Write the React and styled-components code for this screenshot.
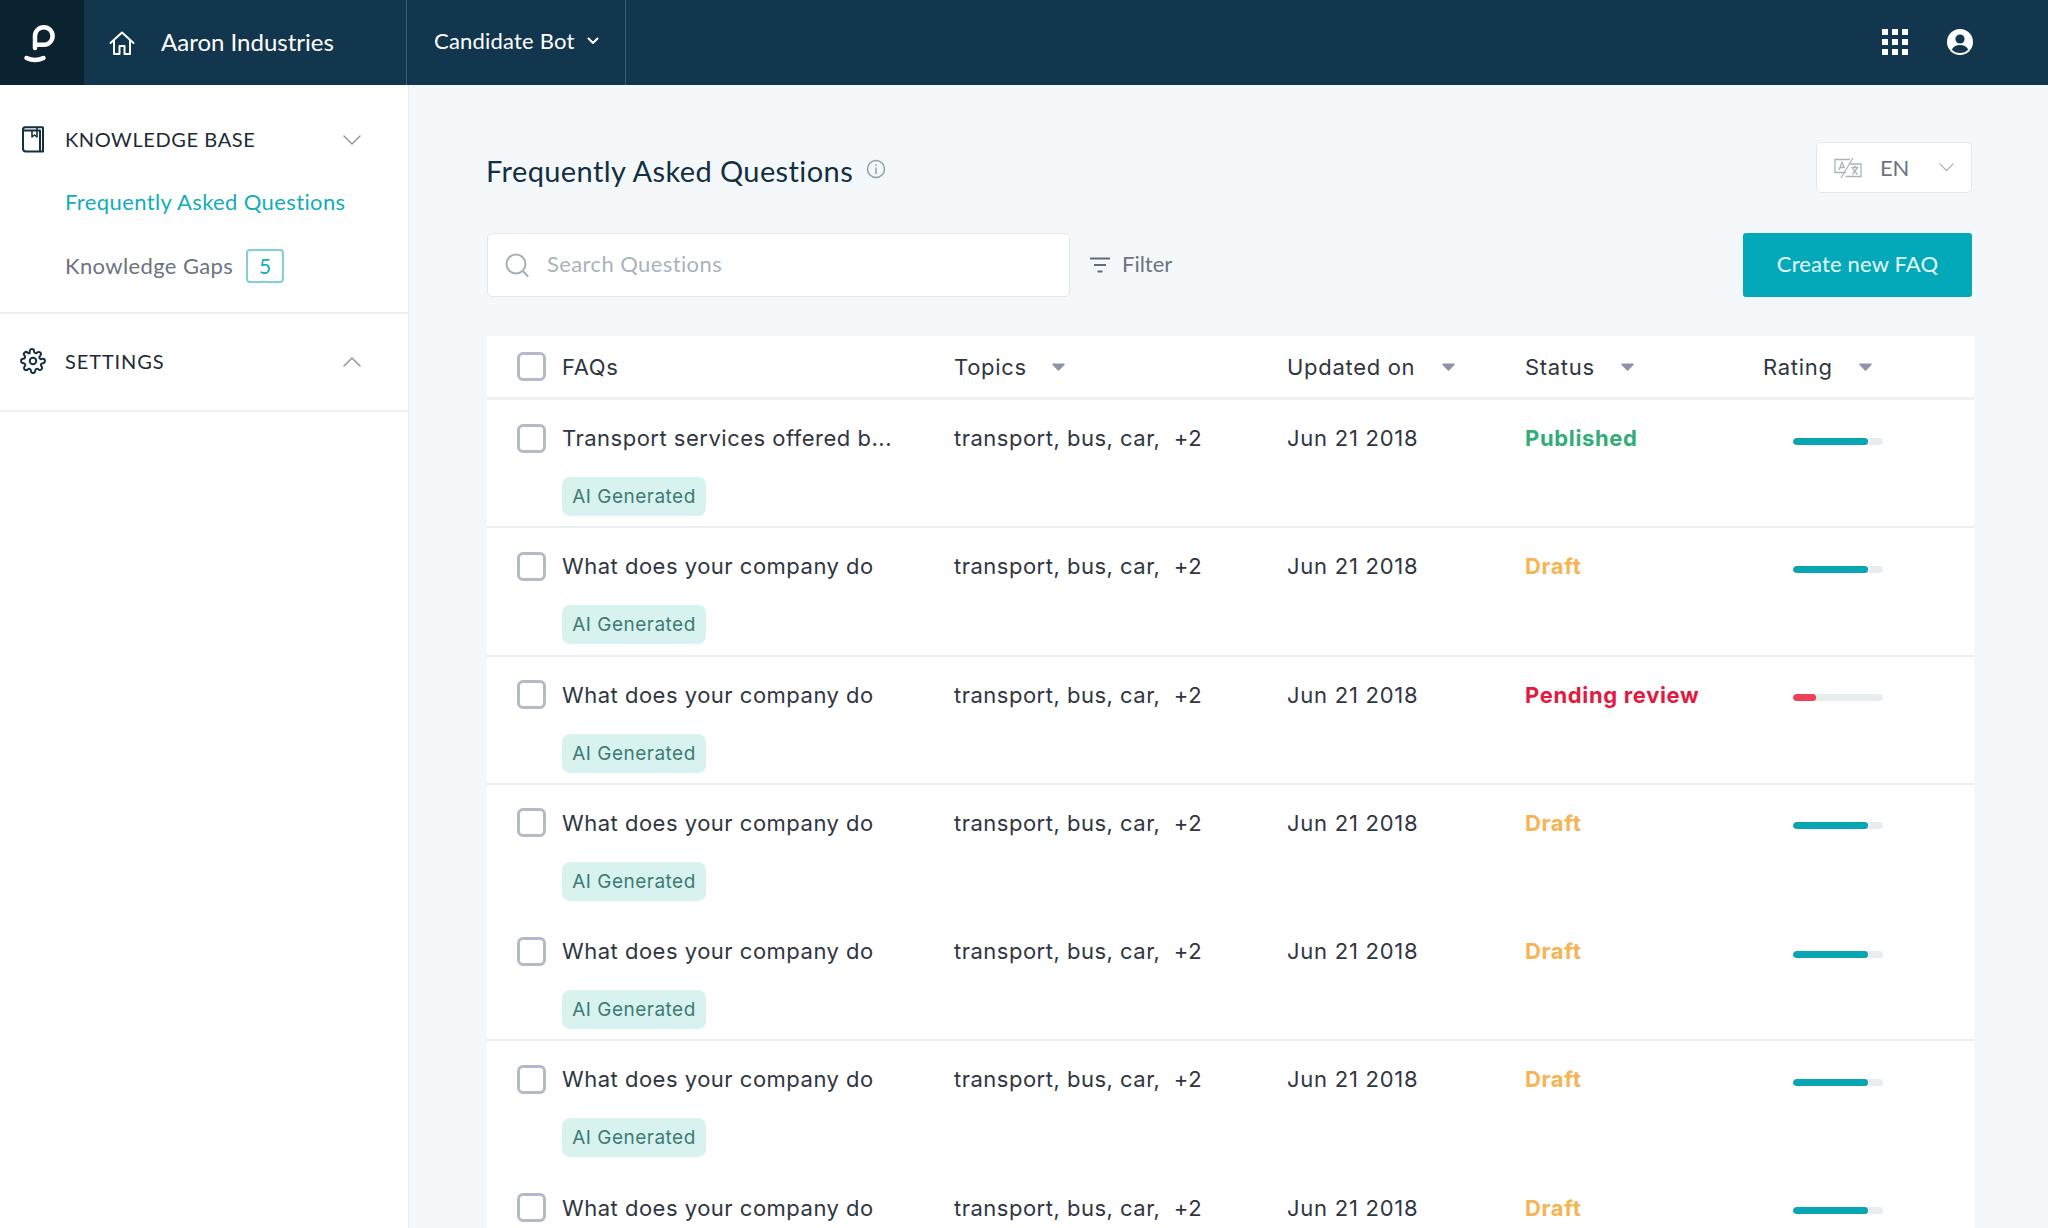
import React from 'react';
import styled, { createGlobalStyle } from 'styled-components';

const GlobalStyle = createGlobalStyle`
    html, body {
        margin: 0;
        padding: 0;
        height: 100%;
        overflow: hidden;
    }
    body {
        font-family: "Lato", "Liberation Sans", sans-serif;
        background: #f4f8fb;
    }
    * { box-sizing: border-box; }
`;

const rows = [
    { title: 'Transport services offered b...', status: 'Published', rating: 83, tag: true },
    { title: 'What does your company do', status: 'Draft', rating: 83, tag: true },
    { title: 'What does your company do', status: 'Pending review', rating: 25, tag: true },
    { title: 'What does your company do', status: 'Draft', rating: 83, tag: true, noLine: true },
    { title: 'What does your company do', status: 'Draft', rating: 83, tag: true },
    { title: 'What does your company do', status: 'Draft', rating: 83, tag: true, noLine: true },
    { title: 'What does your company do', status: 'Draft', rating: 83 },
];

const statusColors = {
    Published: '#33ad78',
    Draft: '#f5b553',
    'Pending review': '#e4193f',
};

const Logo = () => (
    <svg width="44" height="44" viewBox="0 0 44 44" fill="none" stroke="#fff" strokeWidth="4.500" strokeLinecap="round">
        <path d="M15 27V15a8.800 8.800 0 1 1 8.800 8.800H17" />
        <path d="M6.500 37c5.500 2.600 11.500 2.600 17 0" />
    </svg>
);

const HomeIcon = () => (
    <svg width="26" height="26" viewBox="0 0 26 26" fill="none" stroke="#fff" strokeWidth="2" strokeLinejoin="round" strokeLinecap="round">
        <path d="M1.500 13 13 2.500 24.500 13" />
        <path d="M5 10.500V24h5.500v-8h5v8H21V10.500" />
    </svg>
);

const SmallChevron = () => (
    <svg width="12" height="8" viewBox="0 0 12 8" fill="none" stroke="#fff" strokeWidth="2" strokeLinecap="round" strokeLinejoin="round">
        <path d="M1.500 1.500 6 6l4.500-4.500" />
    </svg>
);

const GridIcon = () => (
    <svg width="26" height="26" viewBox="0 0 26 26" fill="#fff">
        {[0, 10, 20].map((y) => [0, 10, 20].map((x) => <rect key={`${x}-${y}`} x={x} y={y} width="6" height="6" />))}
    </svg>
);

const UserIcon = () => (
    <svg width="26" height="26" viewBox="0 0 26 26">
        <circle cx="13" cy="13" r="13" fill="#fff" />
        <circle cx="13" cy="10" r="4.600" fill="#12364d" />
        <path d="M4.800 20.500C6.500 17.200 9.500 16 13 16s6.500 1.200 8.200 4.500C19.300 23 16.300 24 13 24s-6.300-1-8.200-3.500Z" fill="#12364d" />
    </svg>
);

const BookIcon = () => (
    <svg width="22" height="27" viewBox="0 0 22 27" fill="none" stroke="#12303f" strokeWidth="2" strokeLinejoin="round">
        <path d="M3 1.200h17.500a.5.500 0 0 1 .5.500v23.800H4a3 3 0 0 1-3-3V3.500a2.300 2.300 0 0 1 2-2.300Z" />
        <path d="M1 4.500h17v21" />
        <path d="M10 4.500V11l2.500-2 2.500 2V1.500" strokeWidth="1.600" />
    </svg>
);

const GearIcon = () => (
    <svg width="26" height="26" viewBox="0 0 24 24" fill="none" stroke="#12303f" strokeWidth="1.800" strokeLinecap="round" strokeLinejoin="round">
        <circle cx="12" cy="12" r="3" />
        <path d="M19.400 15a1.650 1.650 0 0 0 .33 1.820l.06.06a2 2 0 1 1-2.830 2.830l-.06-.06a1.650 1.650 0 0 0-2.820 1.170V21a2 2 0 1 1-4 0v-.09A1.650 1.650 0 0 0 9 19.400a1.650 1.650 0 0 0-1.820.33l-.06.06a2 2 0 1 1-2.830-2.830l.06-.06A1.650 1.650 0 0 0 3.180 14H3a2 2 0 1 1 0-4h.09A1.650 1.650 0 0 0 4.600 9a1.650 1.650 0 0 0-.33-1.820l-.06-.06a2 2 0 1 1 2.830-2.830l.06.06A1.650 1.650 0 0 0 9 4.680V3a2 2 0 1 1 4 0v.09a1.650 1.650 0 0 0 2.820 1.170l.06-.06a2 2 0 1 1 2.830 2.830l-.06.06A1.650 1.650 0 0 0 20.820 10H21a2 2 0 1 1 0 4h-.09a1.650 1.650 0 0 0-1.510 1Z" />
    </svg>
);

const ThinChevron = ({ up, color = '#8d97a5', size = 18 }) => (
    <svg width={size} height={size * 0.56} viewBox="0 0 18 10" fill="none" stroke={color} strokeWidth="1.500" strokeLinecap="round" strokeLinejoin="round">
        <path d={up ? 'M1 9l8-8 8 8' : 'M1 1l8 8 8-8'} />
    </svg>
);

const InfoIcon = () => (
    <svg width="20" height="20" viewBox="0 0 20 20" fill="none" stroke="#8fa1ad" strokeWidth="1.500" strokeLinecap="round">
        <circle cx="10" cy="10" r="8.500" />
        <path d="M10 9v5.500" />
        <path d="M10 5.800v.4" />
    </svg>
);

const TranslateIcon = () => (
    <svg width="28" height="22" viewBox="0 0 28 22" fill="none" stroke="#aab3bd" strokeWidth="1.300">
        <path d="M12 15.500H1V2.500h15" />
        <path d="M16 7h11v12.500H11.500" />
        <path d="M7 21 19 1" />
        <path d="M5 13 8 5.500 10.500 11M6 10.500h4" />
        <path d="M17.500 10.500h7M21 8.500v2M18.500 17.500l5-7M18.500 11.500l5 6" />
    </svg>
);

const SearchIcon = () => (
    <svg width="24" height="24" viewBox="0 0 24 24" fill="none" stroke="#a5b1ba" strokeWidth="2" strokeLinecap="round">
        <circle cx="11" cy="11" r="9.500" />
        <path d="M18 18l4.500 5" />
    </svg>
);

const FilterIcon = () => (
    <svg width="20" height="16" viewBox="0 0 20 16" fill="none" stroke="#5f6b7a" strokeWidth="2">
        <path d="M0 1.500h20M4 8h12M7.500 14.500h5" />
    </svg>
);

const Caret = () => (
    <svg width="13" height="8" viewBox="0 0 13 8">
        <path d="M1 .5h11a.8.800 0 0 1 .6 1.300L7.100 7.500a.8.800 0 0 1-1.200 0L.4 1.800A.8.800 0 0 1 1 .5Z" fill="#8d93a8" />
    </svg>
);

const App = () => {
    return (
        <Page>
            <GlobalStyle />
            <TopBar>
                <LogoBox><Logo /></LogoBox>
                <CompanyBox>
                    <HomeIcon />
                    <CompanyName>Aaron Industries</CompanyName>
                </CompanyBox>
                <BotBox>
                    <BotName>Candidate Bot</BotName>
                    <SmallChevron />
                </BotBox>
                <TopRight>
                    <GridIcon />
                    <UserIcon />
                </TopRight>
            </TopBar>

            <Body>
                <SideBar>
                    <SideSection $height={229}>
                        <SideHead>
                            <SideIcon><BookIcon /></SideIcon>
                            <SideTitle>KNOWLEDGE BASE</SideTitle>
                            <ThinChevron />
                        </SideHead>
                        <SideLink $active>Frequently Asked Questions</SideLink>
                        <SideLink>
                            Knowledge Gaps
                            <CountBadge>5</CountBadge>
                        </SideLink>
                    </SideSection>
                    <SideSection $height={98} $top={27}>
                        <SideHead>
                            <SideIcon><GearIcon /></SideIcon>
                            <SideTitle $spacing={0.9}>SETTINGS</SideTitle>
                            <ThinChevron up />
                        </SideHead>
                    </SideSection>
                </SideBar>

                <Main>
                    <TitleRow>
                        <Title>Frequently Asked Questions</Title>
                        <InfoSlot><InfoIcon /></InfoSlot>
                        <LangSelect>
                            <TranslateIcon />
                            <LangText>EN</LangText>
                            <ThinChevron color="#aab3bd" size={15} />
                        </LangSelect>
                    </TitleRow>

                    <ToolRow>
                        <SearchBox>
                            <SearchIcon />
                            <SearchText>Search Questions</SearchText>
                        </SearchBox>
                        <FilterButton>
                            <FilterIcon />
                            <FilterText>Filter</FilterText>
                        </FilterButton>
                        <CreateButton>Create new FAQ</CreateButton>
                    </ToolRow>

                    <Table>
                        <HeadRow>
                            <FaqCell>
                                <CheckBox />
                                FAQs
                            </FaqCell>
                            <TopicCell>Topics<CaretGap $gap={25}><Caret /></CaretGap></TopicCell>
                            <DateCell>Updated on<CaretGap $gap={27}><Caret /></CaretGap></DateCell>
                            <StatusCell>Status<CaretGap $gap={26}><Caret /></CaretGap></StatusCell>
                            <RatingCell>Rating<CaretGap $gap={26}><Caret /></CaretGap></RatingCell>
                        </HeadRow>
                        {rows.map((row, idx) => (
                            <Row key={idx} $noLine={row.noLine}>
                                <FaqBlock>
                                    <FaqCell>
                                        <CheckBox />
                                        {row.title}
                                    </FaqCell>
                                    {row.tag && <Tag>AI Generated</Tag>}
                                </FaqBlock>
                                <TopicCell>transport, bus, car,&nbsp; +2</TopicCell>
                                <DateCell $wide>Jun 21 2018</DateCell>
                                <StatusCell>
                                    <StatusText $color={statusColors[row.status]}>{row.status}</StatusText>
                                </StatusCell>
                                <RatingCell>
                                    <BarTrack>
                                        <BarFill $low={row.rating < 50} style={{ width: `${row.rating}%` }} />
                                    </BarTrack>
                                </RatingCell>
                            </Row>
                        ))}
                    </Table>
                </Main>
            </Body>
        </Page>
    );
};

const Page = styled.div`
    height: 100vh;
    overflow: hidden;
    display: flex;
    flex-direction: column;
`;

const TopBar = styled.div`
    height: 85px;
    flex-shrink: 0;
    display: flex;
    background-color: #12364d;
    color: #fff;
`;

const LogoBox = styled.div`
    width: 84px;
    display: flex;
    align-items: center;
    justify-content: center;
    background-color: #0b2230;
`;

const CompanyBox = styled.div`
    width: 323px;
    display: flex;
    align-items: center;
    padding-left: 25px;
    border-right: 1px solid #3d5a6e;
`;

const CompanyName = styled.span`
    margin: 0 0 2px 26px;
    font-size: 24px;
`;

const BotBox = styled.div`
    width: 219px;
    display: flex;
    align-items: center;
    padding: 0 0 4px 27px;
    border-right: 1px solid #3d5a6e;
`;

const BotName = styled.span`
    margin-right: 12px;
    font-size: 22px;
    letter-spacing: 0.2px;
`;

const TopRight = styled.div`
    flex: 1;
    display: flex;
    align-items: center;
    justify-content: flex-end;
    gap: 39px;
    padding: 0 75px 2px 0;
`;

const Body = styled.div`
    flex: 1;
    display: flex;
    min-height: 0;
`;

const SideBar = styled.div`
    width: 409px;
    flex-shrink: 0;
    background-color: #fff;
    border-right: 1px solid #e8edf1;
`;

const SideSection = styled.div`
    height: ${(props) => props.$height}px;
    padding-top: ${(props) => props.$top || 34}px;
    border-bottom: 2px solid #edf0f3;
`;

const SideHead = styled.div`
    display: flex;
    align-items: center;
    height: 40px;
    padding-right: 47px;

    > svg {
        margin-top: 2px;
    }
`;

const SideIcon = styled.div`
    width: 65px;
    display: flex;
    justify-content: center;
`;

const SideTitle = styled.span`
    flex: 1;
    font-size: 20px;
    letter-spacing: ${(props) => props.$spacing || 0.6}px;
    color: #1c2b36;
`;

const SideLink = styled.div`
    display: flex;
    align-items: center;
    height: 44px;
    margin-top: 20px;
    padding-left: 65px;
    font-size: 22px;
    letter-spacing: 0.38px;
    color: ${(props) => (props.$active ? '#12adb9' : '#6b7480')};
`;

const CountBadge = styled.span`
    width: 38px;
    height: 34px;
    margin: 1px 0 0 13px;
    display: flex;
    align-items: center;
    justify-content: center;
    border: 2px solid #7fd0d8;
    border-radius: 4px;
    font-size: 21px;
    color: #12adb9;
`;

const Main = styled.div`
    flex: 1;
    min-width: 0;
    padding: 57px 0 0 78px;
`;

const TitleRow = styled.div`
    height: 51px;
    display: flex;
    align-items: center;
    padding-right: 76px;
`;

const Title = styled.h1`
    margin: 5px 13px 0 -1px;
    font-size: 29px;
    font-weight: 400;
    letter-spacing: 0.4px;
    color: #12303f;
`;

const InfoSlot = styled.span`
    display: flex;
    margin-top: 3px;
`;

const LangSelect = styled.div`
    width: 156px;
    height: 51px;
    margin-left: auto;
    display: flex;
    align-items: center;
    padding: 0 17px;
    background-color: #fff;
    border: 1px solid #e3e8ec;
    border-radius: 5px;
`;

const LangText = styled.span`
    flex: 1;
    margin-left: 18px;
    font-size: 22px;
    letter-spacing: -0.2px;
    color: #6b7480;
`;

const ToolRow = styled.div`
    height: 64px;
    margin-top: 40px;
    display: flex;
    align-items: center;
    padding-right: 76px;
`;

const SearchBox = styled.div`
    width: 583px;
    height: 64px;
    display: flex;
    align-items: center;
    gap: 18px;
    padding-left: 17px;
    background-color: #fff;
    border: 1px solid #e3e8ec;
    border-radius: 5px;
`;

const SearchText = styled.span`
    padding-bottom: 3px;
    font-size: 22px;
    letter-spacing: 0.4px;
    color: #a9b3bc;
`;

const FilterButton = styled.div`
    margin-left: 20px;
    display: flex;
    align-items: center;
    gap: 12px;
    font-size: 22px;
    color: #6b7480;
`;

const FilterText = styled.span`
    padding-bottom: 3px;
`;

const CreateButton = styled.button`
    width: 229px;
    height: 64px;
    margin-left: auto;
    padding: 0 0 3px;
    border: none;
    border-radius: 3px;
    background-color: #03a9b8;
    font-family: inherit;
    font-size: 22px;
    letter-spacing: 0.15px;
    color: #e6fbfc;
`;

const Table = styled.div`
    width: 1487px;
    margin-top: 39px;
    background-color: #fff;
    font-family: "Inter", "Liberation Sans", sans-serif;
    font-size: 22px;
    letter-spacing: 0.5px;
    color: #30363f;
`;

const HeadRow = styled.div`
    height: 64px;
    display: grid;
    grid-template-columns: 467px 333px 238px 238px 1fr;
    align-items: center;
    border-bottom: 3px solid #eef1f3;
    letter-spacing: 0.7px;
`;

const Row = styled.div`
    height: 128.3px;
    display: grid;
    grid-template-columns: 467px 333px 238px 238px 1fr;
    align-items: start;
    padding-top: 23px;
    border-bottom: 2px solid ${(props) => (props.$noLine ? 'transparent' : '#eceff2')};
`;

const FaqBlock = styled.div`
    display: flex;
    flex-direction: column;
`;

const FaqCell = styled.div`
    display: flex;
    align-items: center;
    height: 30px;
    padding-left: 30px;
`;

const TopicCell = styled.div`
    display: flex;
    align-items: center;
    height: 30px;
`;

const DateCell = styled(TopicCell)`
    ${(props) => props.$wide && 'letter-spacing: 0.75px;'}
`;
const StatusCell = styled(TopicCell)``;
const RatingCell = styled(TopicCell)``;

const CheckBox = styled.span`
    width: 29px;
    height: 29px;
    margin-right: 16px;
    flex-shrink: 0;
    background-color: #fff;
    border: 3px solid #b4bac8;
    border-radius: 6px;
`;

const CaretGap = styled.span`
    display: inline-flex;
    margin-left: ${(props) => props.$gap}px;
`;

const Tag = styled.div`
    width: 144px;
    height: 39px;
    margin: 24px 0 0 75px;
    display: flex;
    align-items: center;
    justify-content: center;
    background-color: #d8f3ef;
    border-radius: 8px;
    font-size: 19px;
    color: #3f7a74;
`;

const StatusText = styled.span`
    font-weight: 700;
    letter-spacing: 0.65px;
    color: ${(props) => props.$color};
`;

const BarTrack = styled.div`
    width: 90px;
    height: 7px;
    margin: 6px 0 0 30px;
    background-color: #e8edf0;
    border-radius: 4px;
    overflow: hidden;
`;

const BarFill = styled.div`
    height: 100%;
    border-radius: 4px;
    background-color: ${(props) => (props.$low ? '#ee4056' : '#08a5b3')};
`;

export default App;
